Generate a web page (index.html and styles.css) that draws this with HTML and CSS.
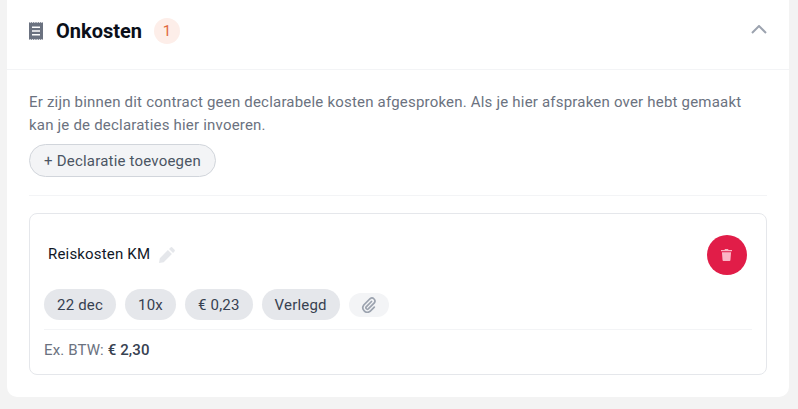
FILE: index.html
```html
<!DOCTYPE html>
<html lang="nl">
<head>
    <meta charset="UTF-8">
    <meta name="viewport" content="width=device-width, initial-scale=1.0">
    <title>Onkosten</title>
    <link rel="stylesheet" href="styles.css">
</head>
<body>
    <section class="panel">
        <header class="panel-head">
            <svg class="receipt-icon" viewBox="0 0 14 18" width="14" height="18" aria-hidden="true">
                <path fill="#6b7280" fill-rule="evenodd" d="M0 0l1.170 1 1.170-1 1.160 1 1.170-1 1.160 1L7 0l1.170 1 1.160-1 1.170 1 1.170-1 1.160 1L14 0v18l-1.170-1-1.160 1-1.170-1-1.170 1-1.160-1L7 18l-1.170-1-1.160 1-1.170-1-1.170 1-1.160-1L0 18zM3 4.500v1.500h8V4.500zM3 8.200v1.500h8V8.200zM3 12v1.500h8V12z"/>
            </svg>
            <h2>Onkosten</h2>
            <span class="count">1</span>
            <svg class="chevron" viewBox="0 0 16 9" width="16" height="9" aria-hidden="true">
                <path d="M1 8l7-7 7 7" fill="none" stroke="#9ca3af" stroke-width="2"/>
            </svg>
        </header>

        <div class="panel-body">
            <p class="intro">Er zijn binnen dit contract geen declarabele kosten afgesproken. Als je hier afspraken over hebt gemaakt kan je de declaraties hier invoeren.</p>
            <button class="add-btn" type="button">+ Declaratie toevoegen</button>
            <hr class="rule">

            <div class="expense">
                <div class="expense-top">
                    <span class="expense-name">Reiskosten KM</span>
                    <svg class="pencil" viewBox="0 0 16 16" width="16" height="16" aria-hidden="true">
                        <path fill="#e5e7eb" d="M11.300.700a1.600 1.600 0 0 1 2.300 0l1.700 1.700a1.600 1.600 0 0 1 0 2.300l-1.300 1.300-4-4zM8.900 3l4 4-8.200 8.200-4.700 0.800 0.800-4.700z"/>
                    </svg>
                    <button class="delete-btn" type="button" aria-label="Verwijderen">
                        <svg viewBox="0 0 12 13" width="11" height="12" aria-hidden="true">
                            <path fill="#fbb6c6" d="M4.300 0h3.400l.5 1H12v1.500H0V1h3.800zM1 3.500h10l-.7 8.500a1 1 0 0 1-1 1H2.700a1 1 0 0 1-1-1z"/>
                        </svg>
                    </button>
                </div>
                <div class="chips">
                    <span class="chip">22 dec</span>
                    <span class="chip">10x</span>
                    <span class="chip">€ 0,23</span>
                    <span class="chip">Verlegd</span>
                    <span class="attach">
                        <svg viewBox="0 0 16 16" width="16" height="16" aria-hidden="true">
                            <path fill="none" stroke="#9ca3af" stroke-width="1.700" stroke-linecap="round" d="M10.500 4.500l-5.300 5.300a1.500 1.500 0 0 0 2.100 2.100l6-6a3 3 0 0 0-4.200-4.200L2.800 8a4.500 4.500 0 0 0 6.300 6.300l4.200-4.200"/>
                        </svg>
                    </span>
                </div>
                <div class="expense-total">Ex. BTW: <strong>€ 2,30</strong></div>
            </div>
        </div>
    </section>
</body>
</html>
```

FILE: styles.css
```css
body {
    margin: 0;
    background-color: #f3f3f3;
    font-family: Roboto, sans-serif;
    color: #111827;
}

.panel {
    margin: 0 9px 12px 7px;
    background-color: #fff;
    border-radius: 0 0 10px 10px;
}

.panel-head {
    display: flex;
    align-items: center;
    height: 62px;
    padding: 0 22px 7px 22px;
    border-bottom: 1px solid #f3f4f6;
}

.panel-head h2 {
    margin: 0 0 0 13px;
    font-size: 20px;
    font-weight: 700;
    color: #0b0f19;
}

.count {
    display: flex;
    align-items: center;
    justify-content: center;
    width: 26px;
    height: 26px;
    margin-left: 12px;
    border-radius: 50%;
    background-color: #fdeee9;
    color: #e0683f;
    font-size: 15px;
}

.chevron {
    margin-left: auto;
    margin-bottom: 3px;
}

.panel-body {
    padding: 21px 22px 22px;
}

.intro {
    margin: 0;
    font-size: 15px;
    line-height: 23px;
    letter-spacing: 0.2px;
    color: #6b7280;
}

.add-btn {
    display: block;
    height: 33px;
    width: 187px;
    margin-top: 7px;
    padding: 0;
    border: 1px solid #d1d5db;
    border-radius: 17px;
    background-color: #f3f4f6;
    color: #4b5563;
    font-family: Roboto, sans-serif;
    font-size: 15px;
    letter-spacing: 0.2px;
}

.rule {
    height: 1px;
    margin: 18px 0 17px;
    border: 0;
    background-color: #f3f4f6;
}

.expense {
    height: 160px;
    padding: 0 14px;
    border: 1px solid #e5e7eb;
    border-radius: 8px;
}

.expense-top {
    display: flex;
    align-items: center;
    height: 40px;
    margin-top: 21px;
    padding: 0 5.500px 0 4px;
}

.expense-name {
    margin-bottom: 2px;
    font-size: 15px;
    color: #111827;
    letter-spacing: 0.18px;
}

.pencil {
    margin-left: 9px;
}

.delete-btn {
    display: flex;
    align-items: center;
    justify-content: center;
    width: 40px;
    height: 40px;
    margin-left: auto;
    padding: 0;
    border: 0;
    border-radius: 50%;
    background-color: #e11d48;
}

.chips {
    display: flex;
    align-items: center;
    gap: 9px;
    margin-top: 14px;
    padding-bottom: 9px;
    border-bottom: 1px solid #f3f4f6;
}

.chip {
    display: flex;
    align-items: center;
    height: 31px;
    padding: 0 13px;
    border-radius: 16px;
    background-color: #e5e7eb;
    color: #374151;
    font-size: 15px;
    letter-spacing: 0.2px;
}

.attach {
    display: flex;
    align-items: center;
    justify-content: center;
    width: 40px;
    height: 24px;
    border-radius: 12px;
    background-color: #f3f4f6;
}

.expense-total {
    margin-top: 10px;
    font-size: 15px;
    line-height: 20px;
    letter-spacing: 0.13px;
    color: #6b7280;
}

.expense-total strong {
    font-weight: 500;
    color: #374151;
}
```
